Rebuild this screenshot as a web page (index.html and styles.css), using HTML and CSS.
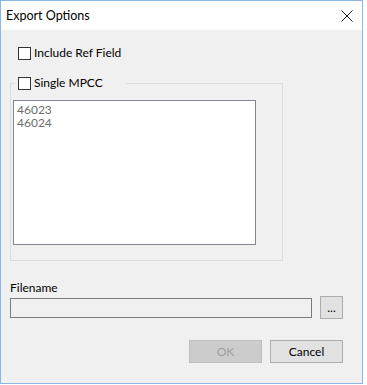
FILE: index.html
```html
<!DOCTYPE html>
<html lang="en">
<head>
    <meta charset="UTF-8">
    <title>Export Options</title>
    <link rel="stylesheet" href="styles.css">
</head>
<body>
    <div class="dialog">
        <div class="title-bar">
            <span class="title">Export Options</span>
            <svg class="close-icon" width="12" height="12" viewBox="0 0 12 12">
                <path d="M0.5 0.5 L11.5 11.5 M11.5 0.5 L0.5 11.5" stroke="#1a1a1a" stroke-width="1" fill="none"/>
            </svg>
        </div>

        <div class="dialog-body">
            <label class="check-row include-ref">
                <span class="check-box"></span>
                <span>Include Ref Field</span>
            </label>

            <fieldset class="group-box">
                <legend class="group-legend">
                    <label class="check-row">
                        <span class="check-box"></span>
                        <span>Single MPCC</span>
                    </label>
                </legend>
                <div class="list-box">
                    <div>46023</div>
                    <div>46024</div>
                </div>
            </fieldset>

            <div class="field-label">Filename</div>
            <div class="file-row">
                <div class="text-input"></div>
                <button class="btn browse-btn">...</button>
            </div>

            <div class="button-row">
                <button class="btn btn-disabled">OK</button>
                <button class="btn">Cancel</button>
            </div>
        </div>
    </div>
</body>
</html>
```

FILE: styles.css
```css
* {
    margin: 0;
    padding: 0;
    box-sizing: border-box;
}

body {
    font-family: Lato, "Noto Sans", sans-serif;
    font-size: 12px;
    color: #000;
    background: #fff;
}

.dialog {
    width: 363px;
    height: 384px;
    border: 1px solid #8cb6e3;
    display: flex;
    flex-direction: column;
}

.title-bar {
    height: 29px;
    background: #fff;
    display: flex;
    align-items: center;
    justify-content: space-between;
    padding: 0 9px 0 5px;
}

.title {
    font-size: 12.5px;
    line-height: 16px;
}

.close-icon {
    display: block;
}

.dialog-body {
    flex: 1;
    background: #f0f0f0;
    padding: 16px 0 0 9px;
}

.check-row {
    display: flex;
    align-items: center;
    gap: 3px;
    line-height: 14px;
}

.check-box {
    width: 13px;
    height: 13px;
    border: 1px solid #333;
    background: #fff;
}

.include-ref {
    margin-left: 8px;
}

.group-box {
    width: 273px;
    margin-top: 16px;
    border: 1px solid #dcdcdc;
    padding: 10px 26px 15px 2px;
}

.group-legend {
    margin-left: 2px;
    padding: 0 23px 0 3px;
}

.list-box {
    height: 145px;
    background: #fff;
    border: 1px solid #828790;
    padding: 2px 3px;
    color: #6d6d6d;
    line-height: 13px;
}

.field-label {
    margin-top: 20px;
    line-height: 14px;
}

.file-row {
    display: flex;
    align-items: center;
    gap: 8px;
    margin-top: 1px;
}

.text-input {
    width: 302px;
    height: 20px;
    border: 1px solid #7a7a7a;
    background: #f0f0f0;
}

.btn {
    font-family: inherit;
    font-size: 12px;
    height: 23px;
    width: 73px;
    background: #e1e1e1;
    border: 1px solid #adadad;
    color: #000;
}

.browse-btn {
    width: 23px;
    line-height: 16px;
}

.button-row {
    display: flex;
    justify-content: flex-end;
    gap: 8px;
    margin: 21px 19px 0 0;
}

.btn-disabled {
    background: #cccccc;
    border-color: #bfbfbf;
    color: #a0a0a0;
}
```
